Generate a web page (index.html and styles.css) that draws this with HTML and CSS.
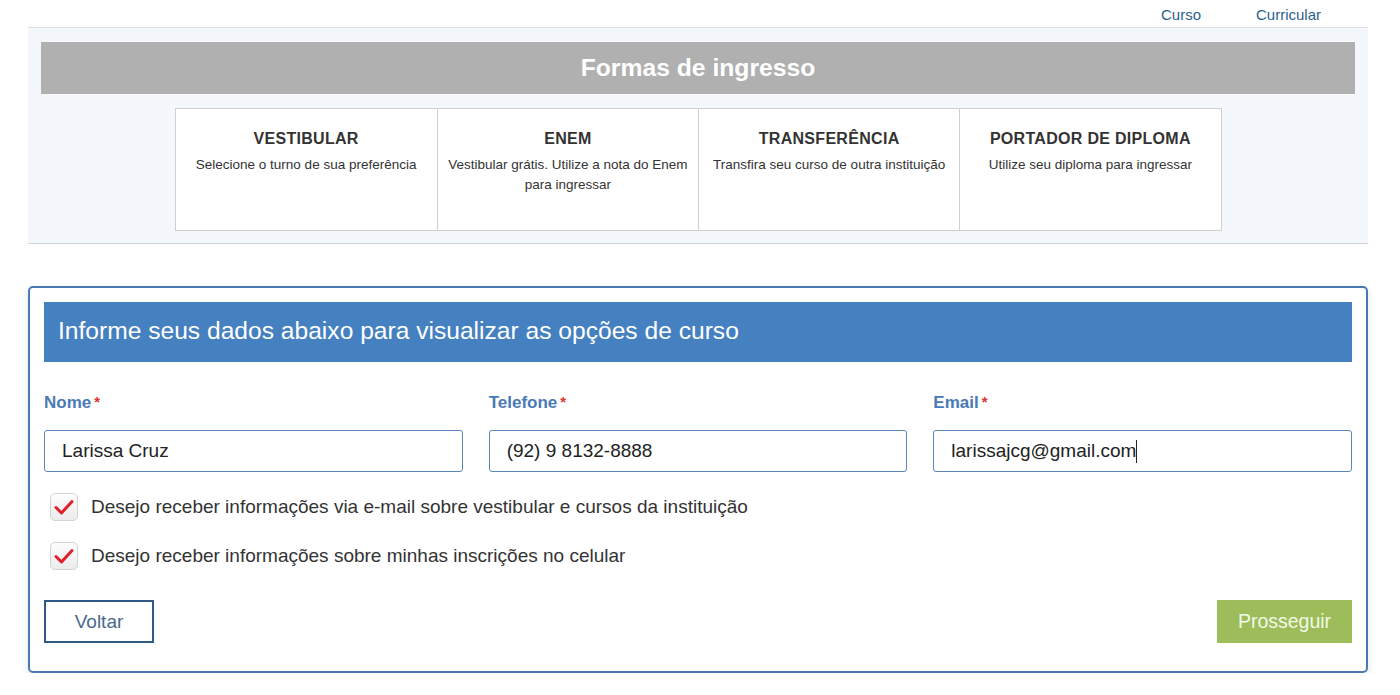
FILE: index.html
```html
<!DOCTYPE html>
<html lang="pt-BR">
<head>
  <meta charset="UTF-8" />
  <meta name="viewport" content="width=device-width, initial-scale=1.0"/>
  <title>Formas de ingresso</title>
  <link rel="stylesheet" href="styles.css">
</head>
<body>
  <div class="top-links">
    <a href="#">Curso</a>
    <a href="#">Curricular</a>
  </div>

  <section class="ingresso">
    <h2 class="ingresso-title">Formas de ingresso</h2>
    <div class="ingresso-cards">
      <div class="ingresso-card">
        <h3>VESTIBULAR</h3>
        <p>Selecione o turno de sua preferência</p>
      </div>
      <div class="ingresso-card">
        <h3>ENEM</h3>
        <p>Vestibular grátis. Utilize a nota do Enem para ingressar</p>
      </div>
      <div class="ingresso-card">
        <h3>TRANSFERÊNCIA</h3>
        <p>Transfira seu curso de outra instituição</p>
      </div>
      <div class="ingresso-card">
        <h3>PORTADOR DE DIPLOMA</h3>
        <p>Utilize seu diploma para ingressar</p>
      </div>
    </div>
  </section>

  <section class="dados">
    <h2 class="dados-header">Informe seus dados abaixo para visualizar as opções de curso</h2>
    <form class="dados-form" onsubmit="return false">
      <div class="fields">
        <div class="field">
          <label for="nome">Nome<span class="req">*</span></label>
          <input type="text" id="nome" value="Larissa Cruz" />
        </div>
        <div class="field">
          <label for="telefone">Telefone<span class="req">*</span></label>
          <input type="text" id="telefone" value="(92) 9 8132-8888" />
        </div>
        <div class="field">
          <label for="email">Email<span class="req">*</span></label>
          <div class="input-box">larissajcg@gmail.com<span class="caret"></span></div>
        </div>
      </div>

      <label class="check">
        <span class="check-box">
          <svg width="22" height="22" viewBox="0 0 22 22"><path d="M3 11.5 L8.5 17 L19 5.5" fill="none" stroke="#e0202a" stroke-width="3" stroke-linecap="round" stroke-linejoin="round"/></svg>
        </span>
        Desejo receber informações via e-mail sobre vestibular e cursos da instituição
      </label>
      <label class="check">
        <span class="check-box">
          <svg width="22" height="22" viewBox="0 0 22 22"><path d="M3 11.5 L8.5 17 L19 5.5" fill="none" stroke="#e0202a" stroke-width="3" stroke-linecap="round" stroke-linejoin="round"/></svg>
        </span>
        Desejo receber informações sobre minhas inscrições no celular
      </label>

      <div class="actions">
        <button type="button" class="btn-voltar">Voltar</button>
        <button type="submit" class="btn-prosseguir">Prosseguir</button>
      </div>
    </form>
  </section>
</body>
</html>
```

FILE: styles.css
```css
body {
  font-family: 'Liberation Sans', Arial, sans-serif;
  margin: 0;
  padding: 0;
  background: #fff;
  color: #333;
}

.top-links {
  display: flex;
  justify-content: flex-end;
  gap: 55px;
  margin: 0 32px 0 28px;
  padding: 6px 47px 0 0;
  height: 21px;
  border-bottom: 1px solid #dcdfe3;
}
.top-links a {
  color: #2c5f8e;
  text-decoration: none;
  font-size: 15px;
}

.ingresso {
  margin: 0 32px 0 28px;
  padding: 14px 13px 12px;
  background: #f4f8fc;
  border-bottom: 1px solid #cfd3d8;
}
.ingresso-title {
  margin: 0;
  height: 52px;
  line-height: 52px;
  background: #b0b0b0;
  color: #fff;
  font-size: 24.7px;
  font-weight: bold;
  text-align: center;
}
.ingresso-cards {
  display: grid;
  grid-template-columns: repeat(4, 1fr);
  width: 1045px;
  margin: 14px auto 0;
  background: #fff;
  border: 1px solid #cfcfcf;
}
.ingresso-card {
  box-sizing: border-box;
  height: 121px;
  padding: 21px 4px 0;
  text-align: center;
  border-left: 1px solid #cfcfcf;
}
.ingresso-card:first-child {
  border-left: none;
}
.ingresso-card h3 {
  margin: 0 0 7px;
  font-size: 16px;
  font-weight: bold;
  color: #333;
  letter-spacing: 0.3px;
}
.ingresso-card p {
  margin: 0;
  font-size: 13.5px;
  line-height: 20px;
  color: #333;
}

.dados {
  margin: 42px 32px 0 28px;
  padding: 14px 14px 28px;
  border: 2px solid #4a78b0;
  border-radius: 5px;
  box-shadow: 0 3px 6px rgba(74, 120, 176, 0.2);
}
.dados-header {
  margin: 0;
  height: 60px;
  line-height: 58px;
  padding-left: 14px;
  background: #4580c0;
  color: #fff;
  font-size: 24.6px;
  font-weight: normal;
}

.fields {
  display: grid;
  grid-template-columns: repeat(3, 1fr);
  gap: 26px;
  margin-top: 31px;
}
.field label {
  display: block;
  font-size: 17px;
  font-weight: bold;
  color: #4a7ab5;
  margin-bottom: 17px;
}
.req {
  color: #e03030;
  margin-left: 3px;
  font-size: 15px;
  vertical-align: top;
}
.field input,
.input-box {
  box-sizing: border-box;
  width: 100%;
  height: 42px;
  padding: 0 17px;
  border: 1px solid #5a86bc;
  border-radius: 3px;
  font-family: 'Liberation Sans', Arial, sans-serif;
  font-size: 19px;
  color: #222;
  background: #fff;
}
.input-box {
  display: flex;
  align-items: center;
}
.caret {
  display: inline-block;
  width: 1px;
  height: 23px;
  background: #222;
}

.check {
  display: flex;
  align-items: center;
  gap: 13px;
  margin-top: 21px;
  padding-left: 6px;
  font-size: 19px;
  color: #333;
}
.check-box {
  display: flex;
  align-items: center;
  justify-content: center;
  width: 28px;
  height: 28px;
  box-sizing: border-box;
  border: 1px solid #d4d4d4;
  border-radius: 5px;
  background: linear-gradient(#fdfdfd, #ececec);
}

.actions {
  display: flex;
  justify-content: space-between;
  margin-top: 30px;
}
.btn-voltar {
  width: 110px;
  height: 43px;
  background: #fff;
  border: 2px solid #2f5a85;
  color: #4a6a8c;
  font-family: 'Liberation Sans', Arial, sans-serif;
  font-size: 19px;
  cursor: pointer;
}
.btn-prosseguir {
  width: 135px;
  height: 43px;
  background: #9dbd5b;
  border: none;
  color: #f2f8e4;
  font-family: 'Liberation Sans', Arial, sans-serif;
  font-size: 19.5px;
  cursor: pointer;
}
```
